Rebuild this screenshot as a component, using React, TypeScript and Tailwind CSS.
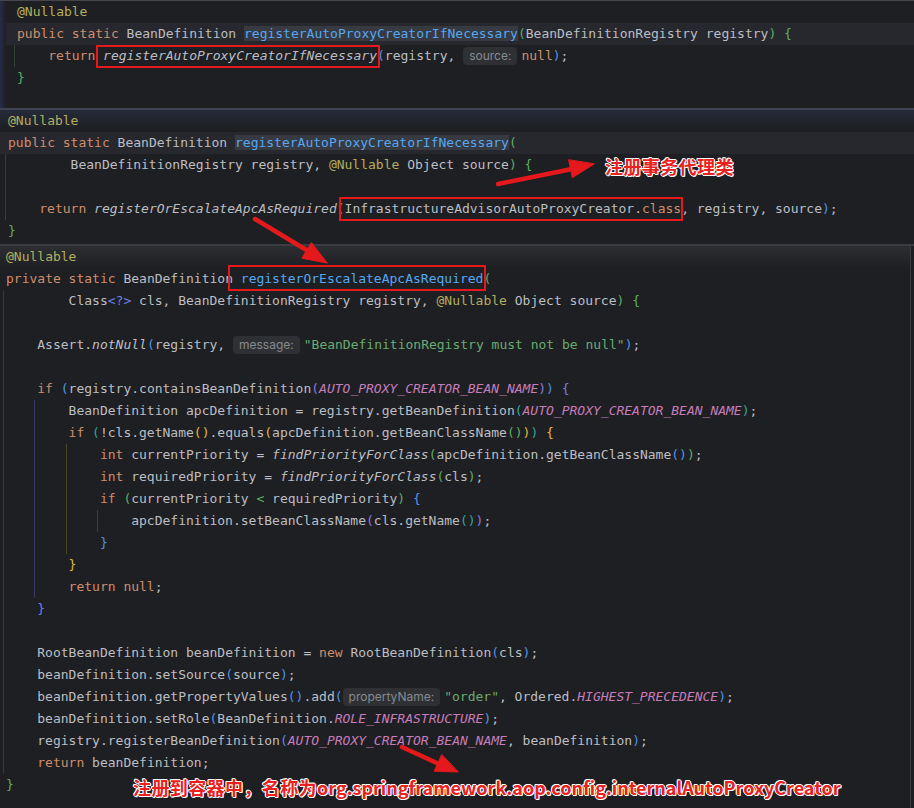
import React from 'react';

type Tok = [string, string] | { hint: string };
type Row = { t: Tok[]; g?: string[]; hl?: boolean };

const T = 'text-[#bcbec4]';
const KW = 'text-[#cf8e6d]';
const AN = 'text-[#b3ae60]';
const FN = 'text-[#56a8f5]';
const FNH = 'text-[#56a8f5] bg-[#373a40]';
const ST = 'text-[#6aab73]';
const CN = 'text-[#c77dbb] italic';
const IT = 'text-[#bcbec4] italic';
const BB = 'text-[#4f93e8]';
const BG = 'text-[#5fad65]';
const BY = 'text-[#e0b83a]';
const BT = 'text-[#2ea59a]';
const BP = 'text-[#8a7be6]';
const BI = 'text-[#6d80e6]';

// indent guide colours (rainbow)
const G0 = 'border-[#313a34]';
const G1 = 'border-[#3a3b62]';
const G2 = 'border-[#4b4426]';
const G3 = 'border-[#27405c]';

// guides sit 3px left of the indent column, so the line starts 3px early
// and a 3px spacer follows the guide blocks
const Line: React.FC<{ row: Row; pad: string }> = ({ row, pad }) => {
  const guides = row.g ?? [];
  const strip = guides.length * 4;
  let left = strip;
  const tokens = row.t.map((tk) => {
    if (left > 0 && Array.isArray(tk)) {
      const cut = Math.min(left, tk[0].length - tk[0].trimStart().length);
      left -= cut;
      return [tk[0].slice(cut), tk[1]] as Tok;
    }
    return tk;
  });
  return (
    <div className={`flex h-[22px] leading-[22px] whitespace-pre ${pad} ${row.hl ? 'bg-[#26282e]' : ''}`}>
      {guides.map((c, i) => (
        <span key={i} className={`w-[4ch] shrink-0 border-l ${c}`} />
      ))}
      <span className="w-[3px] shrink-0" />
      <div>
        {tokens.map((tk, i) =>
          Array.isArray(tk) ? (
            <span key={i} className={tk[1]}>{tk[0]}</span>
          ) : (
            <span
              key={i}
              className="inline-block align-top mt-[2px] h-[18px] leading-[18px] px-[6px] mr-[4px] rounded-[4px] bg-[#2e3034] text-[#878a90] text-[12px] font-['Inter',sans-serif]"
            >
              {tk.hint}
            </span>
          )
        )}
      </div>
    </div>
  );
};

const P1G = 'border-[#2f4231]';

const panel1: Row[] = [
  { t: [['@Nullable', AN]] },
  {
    hl: true,
    t: [['public static ', KW], ['BeanDefinition ', T], ['registerAutoProxyCreatorIfNecessary', FNH], ['(', BG], ['BeanDefinitionRegistry registry', T], [')', BG], [' ', T], ['{', BG]],
  },
  {
    g: [P1G],
    t: [['    return ', KW], ['registerAutoProxyCreatorIfNecessary', IT], ['(', BB], ['registry, ', T], { hint: 'source:' }, ['null', KW], [')', BB], [';', T]],
  },
  { t: [['}', BG]] },
];

const panel2: Row[] = [
  { t: [['@Nullable', AN]] },
  { hl: true, t: [['public static ', KW], ['BeanDefinition ', T], ['registerAutoProxyCreatorIfNecessary', FNH], ['(', BG]] },
  { g: [P1G], t: [['        BeanDefinitionRegistry registry, ', T], ['@Nullable', AN], [' Object source', T], [')', BG], [' {', BG]] },
  { g: [P1G], t: [] },
  {
    g: [P1G],
    t: [['    return ', KW], ['registerOrEscalateApcAsRequired', IT], ['(', BB], ['InfrastructureAdvisorAutoProxyCreator.', T], ['class', KW], [', registry, source', T], [')', BB], [';', T]],
  },
  { t: [['}', BG]] },
];

const L0 = [G0];
const L1 = [G0, G1];
const L2 = [G0, G1, G2];
const L3 = [G0, G1, G2, G3];

const panel3: Row[] = [
  { t: [['@Nullable', AN]] },
  { t: [['private static ', KW], ['BeanDefinition ', T], ['registerOrEscalateApcAsRequired', FN], ['(', BG]] },
  { g: L0, t: [['        Class', T], ['<?>', BI], [' cls, BeanDefinitionRegistry registry, ', T], ['@Nullable', AN], [' Object source', T], [')', BG], [' {', BG]] },
  { g: L0, t: [] },
  { g: L0, t: [['    Assert.', T], ['notNull', IT], ['(', BB], ['registry, ', T], { hint: 'message:' }, ['"BeanDefinitionRegistry must not be null"', ST], [')', BB], [';', T]] },
  { g: L0, t: [] },
  { g: L0, t: [['    if ', KW], ['(', BB], ['registry.containsBeanDefinition', T], ['(', BP], ['AUTO_PROXY_CREATOR_BEAN_NAME', CN], [')', BP], [')', BB], [' ', T], ['{', BI]] },
  { g: L1, t: [['        BeanDefinition apcDefinition = registry.getBeanDefinition', T], ['(', BT], ['AUTO_PROXY_CREATOR_BEAN_NAME', CN], [')', BT], [';', T]] },
  { g: L1, t: [['        if ', KW], ['(', BT], ['!cls.getName', T], ['()', BY], ['.equals', T], ['(', BY], ['apcDefinition.getBeanClassName', T], ['()', BG], [')', BY], [')', BT], [' ', T], ['{', BY]] },
  { g: L2, t: [['            int ', KW], ['currentPriority = ', T], ['findPriorityForClass', IT], ['(', BG], ['apcDefinition.getBeanClassName', T], ['()', BB], [')', BG], [';', T]] },
  { g: L2, t: [['            int ', KW], ['requiredPriority = ', T], ['findPriorityForClass', IT], ['(', BG], ['cls', T], [')', BG], [';', T]] },
  { g: L2, t: [['            if ', KW], ['(', BG], ['currentPriority ', T], ['<', BG], [' requiredPriority', T], [')', BG], [' ', T], ['{', BB]] },
  { g: L3, t: [['                apcDefinition.setBeanClassName', T], ['(', BP], ['cls.getName', T], ['()', BT], [')', BP], [';', T]] },
  { g: L2, t: [['            }', BB]] },
  { g: L1, t: [['        }', BY]] },
  { g: L1, t: [['        return ', KW], ['null', KW], [';', T]] },
  { g: L0, t: [['    }', BI]] },
  { g: L0, t: [] },
  { g: L0, t: [['    RootBeanDefinition beanDefinition = ', T], ['new ', KW], ['RootBeanDefinition', T], ['(', BB], ['cls', T], [')', BB], [';', T]] },
  { g: L0, t: [['    beanDefinition.setSource', T], ['(', BB], ['source', T], [')', BB], [';', T]] },
  { g: L0, t: [['    beanDefinition.getPropertyValues', T], ['()', BB], ['.add', T], ['(', BB], { hint: 'propertyName:' }, ['"order"', ST], [', Ordered.', T], ['HIGHEST_PRECEDENCE', CN], [')', BB], [';', T]] },
  { g: L0, t: [['    beanDefinition.setRole', T], ['(', BB], ['BeanDefinition.', T], ['ROLE_INFRASTRUCTURE', CN], [')', BB], [';', T]] },
  { g: L0, t: [['    registry.registerBeanDefinition', T], ['(', BB], ['AUTO_PROXY_CREATOR_BEAN_NAME', CN], [', beanDefinition', T], [')', BB], [';', T]] },
  { g: L0, t: [['    return ', KW], ['beanDefinition;', T]] },
  { t: [['}', BG]] },
];

const halo = '[text-shadow:1px_0_0_#fff,-1px_0_0_#fff,0_1px_0_#fff,0_-1px_0_#fff,1px_1px_0_#fff,-1px_-1px_0_#fff]';
const note = `leading-[22px] text-[18px] font-bold text-[#e8201e] whitespace-nowrap font-['Noto_Sans_CJK_SC',sans-serif] ${halo}`;

export default function App() {
  return (
    <div className="relative w-[914px] h-[808px] overflow-hidden bg-[#1e1f22] flex flex-col text-[13px] font-['DejaVu_Sans_Mono',monospace]">
      {/* first snippet */}
      <div className="h-[108px] border-t border-[#44464b] pl-[6px] bg-[linear-gradient(90deg,#252c4a,#1e1f22_6px)]">
        {panel1.map((r, i) => (
          <Line key={i} row={r} pad="pl-[8px]" />
        ))}
      </div>
      <div className="h-[2px] bg-[#3e4356]" />

      {/* second snippet */}
      <div className="h-[134px] bg-[linear-gradient(#252a3a,#1e1f22_20px)]">
        {panel2.map((r, i) => (
          <Line key={i} row={r} pad="pl-[5px]" />
        ))}
      </div>
      <div className="h-[2px] bg-[#3a3c41]" />

      {/* third snippet */}
      <div className="flex-1 mr-[3px] border-r border-[#393b40] bg-[linear-gradient(#2c2e32,#1e1f22_22px)]">
        {panel3.map((r, i) => (
          <Line key={i} row={r} pad="pl-[3px]" />
        ))}
      </div>

      {/* red markup drawn over the screenshot */}
      <div className="absolute left-[96px] top-[45px] w-[284px] h-[23px] border-2 border-[#e5191c]" />
      <div className="absolute left-[339px] top-[197px] w-[344px] h-[24px] border-2 border-[#e5191c]" />
      <div className="absolute left-[228px] top-[265px] w-[258px] h-[26px] border-2 border-[#e5191c]" />

      <svg className="absolute inset-0 pointer-events-none" width="914" height="808">
        <g fill="#e5191c" stroke="#e5191c" strokeLinecap="round">
          <line x1="498" y1="184" x2="572" y2="169" strokeWidth="4.5" />
          <polygon points="594,164 572.3,177.7 568.7,160.1" />
          <line x1="255" y1="219" x2="308" y2="251" strokeWidth="4.5" />
          <polygon points="327,263 301.8,258.2 311.2,242.8" />
          <line x1="402" y1="747" x2="439" y2="764" strokeWidth="4.5" />
          <polygon points="458,772 434.2,771.2 441.6,754.8" />
        </g>
      </svg>

      <div className={`absolute left-[605px] top-[155px] tracking-[0.4px] ${note}`}>注册事务代理类</div>
      <div className={`absolute left-[133px] top-[776px] ${note}`}>
        <span className="tracking-[0.4px]">注册到容器中，名称为</span>org.springframework.aop.config.internalAutoProxyCreator
      </div>
    </div>
  );
}
